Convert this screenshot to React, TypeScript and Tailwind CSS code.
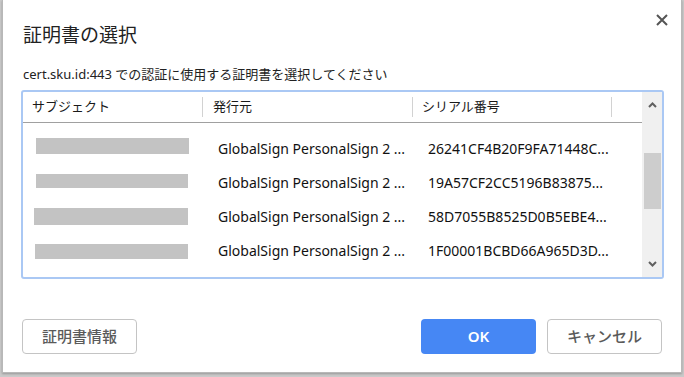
import React from "react";

const rows = [
  { bar: "ml-[13px] w-[153px] h-[16px] mt-[-4px]", serial: "26241CF4B20F9FA71448C..." },
  { bar: "ml-[13px] w-[152px] h-[14px] mt-[-2px]", serial: "19A57CF2CC5196B83875..." },
  { bar: "ml-[11px] w-[154px] h-[17px] mt-[1px]", serial: "58D7055B8525D0B5EBE4..." },
  { bar: "ml-[12px] w-[153px] h-[15px] mt-[2px]", serial: "1F00001BCBD66A965D3D..." },
];

export default function App() {
  return (
    <div
      className="w-[684px] h-[377px] bg-[#c9c9c9] overflow-hidden"
      style={{ fontFamily: '"Noto Sans", "Noto Sans CJK JP", sans-serif' }}
    >
      <div className="relative ml-[2px] w-[680px] h-[373px] bg-white border-x border-b border-[#b8b8b8] shadow-[0_1px_2px_rgba(0,0,0,0.25)]">
        <button className="absolute top-[12px] right-[11px] w-[16px] h-[16px] flex items-center justify-center">
          <svg width="12" height="12" viewBox="0 0 12 12">
            <path d="M1 1L11 11M11 1L1 11" stroke="#555" strokeWidth="2" />
          </svg>
        </button>
        <div className="pl-[20px] pr-[18px] pt-[21px]">
          <div
            className="text-[19px] leading-[26px] text-[#222]"
            style={{ fontFamily: '"Noto Sans CJK JP", sans-serif' }}
          >
            証明書の選択
          </div>
          <div className="mt-[18px] text-[13px] leading-[18px] text-[#222]">
            cert.sku.id:443 での認証に使用する証明書を選択してください
          </div>
        </div>
        <div className="ml-[18px] mt-[7px] w-[643px] h-[189px] rounded-[3px] border-2 border-[#aac8f4] flex overflow-hidden">
          <div className="flex-1 flex flex-col text-[13px] text-[#1a1a1a]">
            <div className="h-[31px] border-b border-[#a0a0a0] flex items-center shrink-0">
              <div className="w-[179px] pl-[9px] flex items-center h-full">サブジェクト</div>
              <div className="w-px h-[20px] bg-[#d2d2d2]" />
              <div className="w-[209px] pl-[10px]">発行元</div>
              <div className="w-px h-[20px] bg-[#d2d2d2]" />
              <div className="w-[198px] pl-[9px]">シリアル番号</div>
              <div className="w-px h-[20px] bg-[#d2d2d2]" />
            </div>
            <div className="pt-[8px] text-[14px] text-[#111]">
              {rows.map((r, i) => (
                <div key={i} className="h-[34px] flex items-center">
                  <div className="w-[180px] flex items-center">
                    <div className={`bg-[#c3c3c3] ${r.bar}`} />
                  </div>
                  <div className="w-[210px] pl-[15px] whitespace-nowrap">GlobalSign PersonalSign 2 ...</div>
                  <div className="w-[199px] pl-[15px] whitespace-nowrap">{r.serial}</div>
                </div>
              ))}
            </div>
          </div>
          <div className="w-[20px] bg-[#f0f0f0] flex flex-col items-center relative">
            <svg className="absolute top-[10px]" width="9" height="6" viewBox="0 0 9 6">
              <path d="M1 5L4.5 1.5L8 5" stroke="#606060" strokeWidth="2" fill="none" />
            </svg>
            <div className="absolute top-[61px] left-[2px] w-[17px] h-[56px] bg-[#cdcdcd]" />
            <svg className="absolute bottom-[10px]" width="9" height="6" viewBox="0 0 9 6">
              <path d="M1 1L4.5 4.5L8 1" stroke="#606060" strokeWidth="2" fill="none" />
            </svg>
          </div>
        </div>
        <div className="mt-[40px] px-[19px] flex items-center">
          <button
            className="w-[115px] h-[35px] rounded-[4px] border border-[#c4c4c4] bg-white text-[15px] font-medium text-[#5a5a5a]"
            style={{ fontFamily: '"Noto Sans CJK JP", sans-serif' }}
          >
            証明書情報
          </button>
          <div className="flex-1" />
          <button className="w-[115px] h-[35px] rounded-[4px] bg-[#4687f4] text-[15px] font-semibold text-white">
            OK
          </button>
          <button
            className="ml-[11px] w-[115px] h-[35px] rounded-[4px] border border-[#c4c4c4] bg-white text-[15px] font-medium text-[#5a5a5a]"
            style={{ fontFamily: '"Noto Sans CJK JP", sans-serif' }}
          >
            キャンセル
          </button>
        </div>
      </div>
    </div>
  );
}
